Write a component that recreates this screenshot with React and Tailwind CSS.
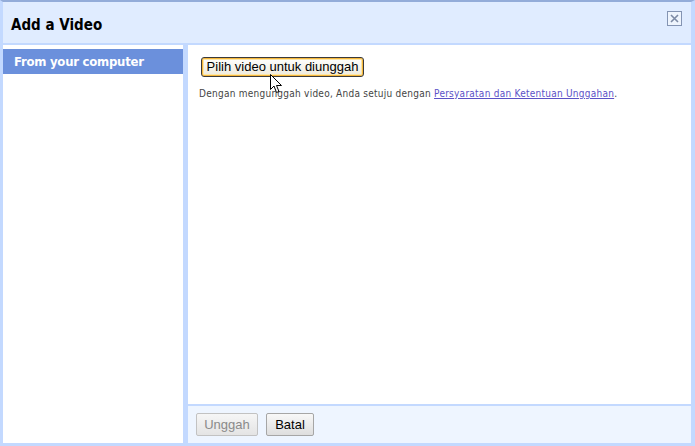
import React from 'react';

const tahoma = { fontFamily: '"DejaVu Sans Condensed", Tahoma, "DejaVu Sans", sans-serif' };
const arial = { fontFamily: '"Liberation Sans", Arial, sans-serif' };

function CloseBox() {
    return (
        <div className="mt-[9px] w-[15px] h-[15px] border border-[#8494b3] bg-[#eef4fd] flex items-center justify-center">
            <svg width="9" height="9" viewBox="0 0 9 9">
                <path d="M1 1 L8 8 M8 1 L1 8" stroke="#7c8aa5" strokeWidth="1.6" />
            </svg>
        </div>
    );
}

function Cursor() {
    return (
        <svg className="absolute left-[267px] top-[72px]" width="13" height="20" viewBox="0 0 13 20">
            <path d="M0.5 0.5 L0.5 15.5 L4 12 L6.5 18.5 L9 17.5 L6.5 11.5 L11.5 11.5 Z" fill="#fff" stroke="#000" strokeWidth="1" />
        </svg>
    );
}

export default function App() {
    return (
        <div className="relative w-[695px] h-[446px] flex flex-col bg-white border-t-2 border-t-[#93acd9] border-l-[3px] border-l-[#c3d9ff] border-r-4 border-r-[#c3d9ff] border-b-[3px] border-b-[#c3d9ff]">
            {/* header */}
            <div className="h-[43px] shrink-0 bg-[#e0ecff] border-b-2 border-b-[#c3d9ff] flex items-start justify-between pl-[8px] pr-[9px]">
                <span className="mt-[14px] text-[15px] leading-[18px] font-bold text-black" style={tahoma}>Add a Video</span>
                <CloseBox />
            </div>

            <div className="flex flex-1 min-h-0">
                {/* sidebar */}
                <div className="w-[180px] shrink-0 bg-white pt-[4px]">
                    <div className="h-[25px] bg-[#6b90dc] text-white font-bold text-[13px] tracking-[-0.25px] flex items-center pl-[11px]" style={tahoma}>
                        From your computer
                    </div>
                </div>
                <div className="w-[5px] shrink-0 bg-[#c3d9ff]" />

                {/* main */}
                <div className="flex-1 flex flex-col">
                    <div className="flex-1 bg-white pl-[13px] pt-[8px]">
                        <button
                            className="h-[20px] w-[163px] text-[13px] text-black rounded-[3px] border border-[#3a3a3a] bg-gradient-to-b from-[#ffffff] to-[#ede9dc] shadow-[inset_0_0_0_1px_#f6b73c,inset_0_0_0_2px_#fce7a8] leading-none"
                            style={arial}
                        >
                            Pilih video untuk diunggah
                        </button>
                        <p className="mt-[9px] ml-[-2px] text-[10px] text-[#444] tracking-[0.25px]" style={tahoma}>
                            Dengan mengunggah video, Anda setuju dengan{' '}
                            <a href="#" className="text-[#5b51c7] underline">Persyaratan dan Ketentuan Unggahan</a>.
                        </p>
                    </div>
                    <div className="h-[39px] shrink-0 bg-[#eef5ff] border-t-2 border-t-[#c3d9ff] flex items-center gap-[8px] pl-[8px]">
                        <button
                            className="h-[23px] w-[62px] text-[13px] text-[#8a8a8a] border border-[#c2c2c2] rounded-[2px] bg-gradient-to-b from-[#f6f6f6] to-[#e4e4e4]"
                            style={arial}
                        >
                            Unggah
                        </button>
                        <button
                            className="h-[23px] w-[48px] text-[13px] text-black border border-[#a6a6a6] rounded-[2px] bg-gradient-to-b from-[#f8f8f8] to-[#dedede]"
                            style={arial}
                        >
                            Batal
                        </button>
                    </div>
                </div>
            </div>
            <Cursor />
        </div>
    );
}
